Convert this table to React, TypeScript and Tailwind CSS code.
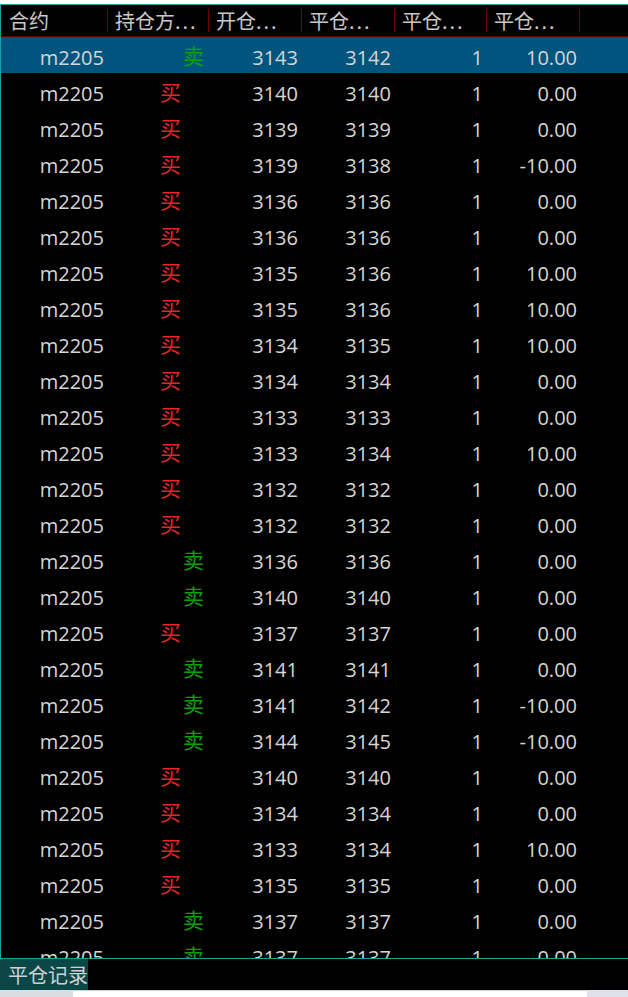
import React from "react";

type Row = [string, "买" | "卖", string, string, string, string];

const rows: Row[] = [
  ["m2205", "卖", "3143", "3142", "1", "10.00"],
  ["m2205", "买", "3140", "3140", "1", "0.00"],
  ["m2205", "买", "3139", "3139", "1", "0.00"],
  ["m2205", "买", "3139", "3138", "1", "-10.00"],
  ["m2205", "买", "3136", "3136", "1", "0.00"],
  ["m2205", "买", "3136", "3136", "1", "0.00"],
  ["m2205", "买", "3135", "3136", "1", "10.00"],
  ["m2205", "买", "3135", "3136", "1", "10.00"],
  ["m2205", "买", "3134", "3135", "1", "10.00"],
  ["m2205", "买", "3134", "3134", "1", "0.00"],
  ["m2205", "买", "3133", "3133", "1", "0.00"],
  ["m2205", "买", "3133", "3134", "1", "10.00"],
  ["m2205", "买", "3132", "3132", "1", "0.00"],
  ["m2205", "买", "3132", "3132", "1", "0.00"],
  ["m2205", "卖", "3136", "3136", "1", "0.00"],
  ["m2205", "卖", "3140", "3140", "1", "0.00"],
  ["m2205", "买", "3137", "3137", "1", "0.00"],
  ["m2205", "卖", "3141", "3141", "1", "0.00"],
  ["m2205", "卖", "3141", "3142", "1", "-10.00"],
  ["m2205", "卖", "3144", "3145", "1", "-10.00"],
  ["m2205", "买", "3140", "3140", "1", "0.00"],
  ["m2205", "买", "3134", "3134", "1", "0.00"],
  ["m2205", "买", "3133", "3134", "1", "10.00"],
  ["m2205", "买", "3135", "3135", "1", "0.00"],
  ["m2205", "卖", "3137", "3137", "1", "0.00"],
  ["m2205", "卖", "3137", "3137", "1", "0.00"],
];

const widths = ["w-[107px]", "w-[101px]", "w-[93px]", "w-[93px]", "w-[92px]", "w-[93px]"];
const headers: [string, boolean][] = [
  ["合约", false],
  ["持仓方", true],
  ["开仓", true],
  ["平仓", true],
  ["平仓", true],
  ["平仓", true],
];

const cjk = { fontFamily: '"Noto Sans CJK SC", "Noto Sans", sans-serif' };
const num = { fontFamily: '"Open Sans", "Noto Sans CJK SC", sans-serif' };

export default function App() {
  return (
    <div className="w-[628px] h-[997px] bg-white flex flex-col overflow-hidden">
      <div className="h-[4px] shrink-0 bg-white" />
      <div className="flex-1 flex flex-col bg-black border-t border-l border-b border-[#1aa0a0] min-h-0">
        {/* header */}
        <div className="h-[32px] shrink-0 flex border-b border-[#6a0000] text-[#c8c8c8] text-[20px] leading-none" style={cjk}>
          {headers.map(([h, dots], i) => (
            <div key={i} className={`${widths[i]} shrink-0 flex items-center justify-between`}>
              <span className={i === 0 ? "pl-[8px]" : "pl-[7px]"}>
                {h}
                {dots && <span className="tracking-[2px]">...</span>}
              </span>
              <span className="w-px h-[23px] bg-[#6a0000]" />
            </div>
          ))}
        </div>
        {/* body */}
        <div className="flex-1 min-h-0 overflow-hidden">
          {rows.map((r, i) => (
            <div
              key={i}
              className={`h-[36px] pt-[6px] flex items-center text-[20px] leading-none text-[#d6d6d6] ${i === 0 ? "bg-[#00557f]" : ""}`}
              style={num}
            >
              <div className={`${widths[0]} text-right pr-[4px]`}>{r[0]}</div>
              <div className={`${widths[1]} text-right text-[21px] mb-[5px]`} style={cjk}>
                {r[1] === "买" ? (
                  <span className="text-[#e02828] pr-[28px]">买</span>
                ) : (
                  <span className="text-[#0aa00a] pr-[5px]">卖</span>
                )}
              </div>
              <div className={`${widths[2]} text-right pr-[4px]`}>{r[2]}</div>
              <div className={`${widths[3]} text-right pr-[4px]`}>{r[3]}</div>
              <div className={`${widths[4]} text-right pr-[4px]`}>{r[4]}</div>
              <div className={`${widths[5]} text-right pr-[3px]`}>{r[5]}</div>
            </div>
          ))}
        </div>
      </div>
      {/* tab bar */}
      <div className="h-[31px] shrink-0 bg-black flex">
        <div className="w-[88px] h-full bg-[#0b4747] flex items-center pl-[8px] text-[20px] leading-none text-[#d0d0d0]" style={cjk}>
          平仓记录
        </div>
      </div>
      {/* bottom strip */}
      <div className="h-[7px] shrink-0 flex">
        <div className="w-[73px] bg-[#dcdce4]" />
        <div className="w-[514px] bg-white border-t border-[#d0d0d0]" />
        <div className="flex-1 bg-[#e0e0ea]" />
      </div>
    </div>
  );
}
